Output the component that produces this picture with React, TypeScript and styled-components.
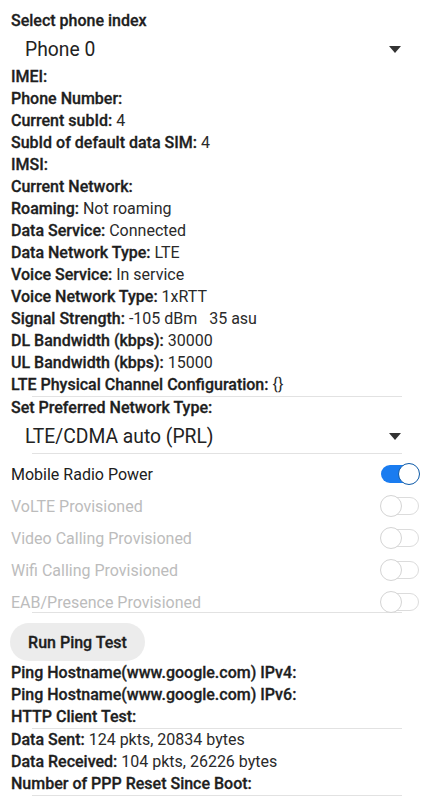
import React from 'react'
import styled, { createGlobalStyle } from 'styled-components'

const GlobalStyle = createGlobalStyle`
  body {
    margin: 0;
    background: #ffffff;
    font-family: Roboto, 'Liberation Sans', sans-serif;
    color: #1e1e1e;
  }
`

const Page = styled.div`
  width: 433px;
  padding: 10px 0 0 11px;
  box-sizing: border-box;
`

const Heading = styled.div`
  font-size: 16px;
  font-weight: 500;
  line-height: 22px;
  -webkit-text-stroke: 0.3px currentColor;
`

const Spinner = styled.div`
  display: flex;
  align-items: center;
  justify-content: space-between;
  height: 34px;
  padding: 0 32px 0 14px;
  font-size: 19.3px;
  color: #222;
`

const Arrow = styled.span`
  width: 0;
  height: 0;
  border-left: 6px solid transparent;
  border-right: 6px solid transparent;
  border-top: 7px solid #333;
`

const InfoRow = styled.div`
  font-size: 16px;
  line-height: 22px;
  white-space: nowrap;
  color: #2a2a2a;
`

const Label = styled.span`
  font-weight: 500;
  color: #1e1e1e;
  -webkit-text-stroke: 0.3px currentColor;
`

const Divider = styled.div<{ $pull?: number }>`
  height: 1px;
  background: #e2e2e2;
  margin: ${(p) => (p.$pull ? `-${p.$pull}px` : '0')} 31px 0 21px;
`

const SwitchList = styled.div`
  margin-top: 4px;
`

const SwitchRow = styled.div<{ $disabled?: boolean }>`
  display: flex;
  align-items: center;
  justify-content: space-between;
  height: 32px;
  padding-right: 14px;
  font-size: 16px;
  color: ${(p) => (p.$disabled ? '#bcbcbc' : '#202020')};
`

const Track = styled.span<{ $on?: boolean }>`
  position: relative;
  width: 38px;
  height: 18px;
  border-radius: 9px;
  box-sizing: border-box;
  background: ${(p) => (p.$on ? '#1a7cf0' : 'transparent')};
  border: ${(p) => (p.$on ? 'none' : '1.5px solid #dcdcdc')};
`

const Thumb = styled.span<{ $on?: boolean }>`
  position: absolute;
  top: 50%;
  width: 22px;
  height: 22px;
  border-radius: 50%;
  box-sizing: border-box;
  background: #fff;
  transform: translateY(-50%);
  ${(p) =>
    p.$on
      ? 'right: -1px; border: 1.5px solid #0d5aa8;'
      : 'left: -2px; border: 1.5px solid #d4d4d4;'}
`

const PingButton = styled.button`
  margin: 10px 0 1px -1px;
  width: 135px;
  height: 38px;
  border: none;
  border-radius: 19px;
  background: #ececec;
  font-family: inherit;
  font-size: 16px;
  font-weight: 500;
  color: #1e1e1e;
  -webkit-text-stroke: 0.3px currentColor;
`

const info1: [string, string][] = [
  ['IMEI:', ''],
  ['Phone Number:', ''],
  ['Current subId:', '4'],
  ['SubId of default data SIM:', '4'],
  ['IMSI:', ''],
  ['Current Network:', ''],
  ['Roaming:', 'Not roaming'],
  ['Data Service:', 'Connected'],
  ['Data Network Type:', 'LTE'],
  ['Voice Service:', 'In service'],
  ['Voice Network Type:', '1xRTT'],
  ['Signal Strength:', '-105 dBm\u00a0\u00a0\u00a035 asu'],
  ['DL Bandwidth (kbps):', '30000'],
  ['UL Bandwidth (kbps):', '15000'],
  ['LTE Physical Channel Configuration:', '{}'],
]

const switches: [string, boolean][] = [
  ['Mobile Radio Power', true],
  ['VoLTE Provisioned', false],
  ['Video Calling Provisioned', false],
  ['Wifi Calling Provisioned', false],
  ['EAB/Presence Provisioned', false],
]

const Info = ({ label, value }: { label: string; value: string }) => (
  <InfoRow>
    <Label>{label}</Label>
    {value && ` ${value}`}
  </InfoRow>
)

export default function App() {
  return (
    <Page>
      <GlobalStyle />
      <Heading>Select phone index</Heading>
      <Spinner>
        Phone 0
        <Arrow />
      </Spinner>
      {info1.map(([l, v]) => (
        <Info key={l} label={l} value={v} />
      ))}
      <Divider />
      <Heading>Set Preferred Network Type:</Heading>
      <Spinner>
        LTE/CDMA auto (PRL)
        <Arrow />
      </Spinner>
      <Divider />
      <SwitchList>
        {switches.map(([l, on], i) => (
          <SwitchRow key={l} $disabled={i > 0}>
            {l}
            <Track $on={on}>
              <Thumb $on={on} />
            </Track>
          </SwitchRow>
        ))}
      </SwitchList>
      <Divider $pull={6} />
      <PingButton>Run Ping Test</PingButton>
      <Info label="Ping Hostname(www.google.com) IPv4:" value="" />
      <Info label="Ping Hostname(www.google.com) IPv6:" value="" />
      <Info label="HTTP Client Test:" value="" />
      <Divider />
      <Info label="Data Sent:" value="124 pkts, 20834 bytes" />
      <Info label="Data Received:" value="104 pkts, 26226 bytes" />
      <Info label="Number of PPP Reset Since Boot:" value="" />
      <Divider />
    </Page>
  )
}
